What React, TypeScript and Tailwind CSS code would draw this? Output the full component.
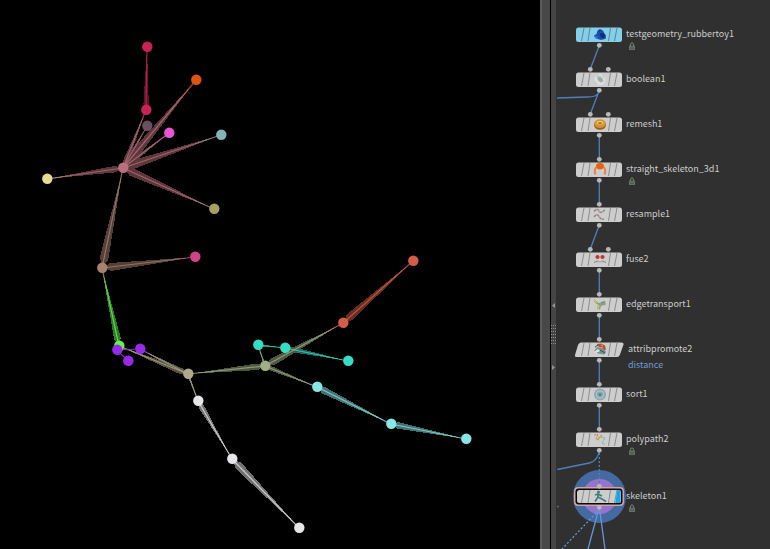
type Joint = { x: number; y: number; color: string };

const joints: Record<string, Joint> = {
  crown: { x: 147, y: 47, color: "#c92356" },
  brow: { x: 146, y: 110, color: "#c92356" },
  ear: { x: 196, y: 80, color: "#e0530f" },
  eye: { x: 147, y: 126, color: "#6a5062" },
  nose: { x: 169, y: 133, color: "#e854d4" },
  cheek: { x: 221, y: 135, color: "#82b5b5" },
  jaw: { x: 214, y: 209, color: "#a5a163" },
  horn: { x: 47, y: 179, color: "#e5dc92" },
  head: { x: 123, y: 168, color: "#b9707a" },
  neck: { x: 102, y: 268, color: "#a88370" },
  throat: { x: 195, y: 257, color: "#d04388" },
  chest: { x: 119, y: 346, color: "#62f54e" },
  pelvis: { x: 188, y: 374, color: "#b0a98a" },
  hand: { x: 128, y: 361, color: "#982bea" },
  wrist: { x: 117, y: 350, color: "#982bea" },
  elbow: { x: 140, y: 349, color: "#982bea" },
  spine: { x: 265, y: 366, color: "#9eb083" },
  finA: { x: 258, y: 345, color: "#37dcc5" },
  finB: { x: 285, y: 348, color: "#37dcc5" },
  finC: { x: 348, y: 361, color: "#37dcc5" },
  wingA: { x: 343, y: 323, color: "#d35d47" },
  wingB: { x: 413, y: 261, color: "#d35d47" },
  tailA: { x: 317, y: 387, color: "#88e7e5" },
  tailB: { x: 391, y: 424, color: "#88e7e5" },
  tailC: { x: 466, y: 439, color: "#88e7e5" },
  legA: { x: 198, y: 401, color: "#e6e6e8" },
  legB: { x: 232, y: 459, color: "#e6e6e8" },
  legC: { x: 299, y: 528, color: "#e6e6e8" },
};

// parent, child, body colour
const bones: [string, string, string][] = [
  ["head", "brow", "#5b363b"],
  ["head", "eye", "#5b363b"],
  ["head", "ear", "#5b363b"],
  ["head", "nose", "#5b363b"],
  ["head", "cheek", "#5b363b"],
  ["head", "jaw", "#5b363b"],
  ["head", "horn", "#5b363b"],
  ["brow", "crown", "#65112b"],
  ["neck", "head", "#534037"],
  ["neck", "throat", "#534037"],
  ["chest", "neck", "#2f7a25"],
  ["pelvis", "chest", "#565243"],
  ["pelvis", "elbow", "#565243"],
  ["pelvis", "legA", "#565243"],
  ["wrist", "elbow", "#4b1574"],
  ["wrist", "hand", "#4b1574"],
  ["spine", "pelvis", "#4d5640"],
  ["spine", "finA", "#4d5640"],
  ["finA", "finB", "#1a6c61"],
  ["finB", "finC", "#1a6c61"],
  ["spine", "wingA", "#4d5640"],
  ["wingA", "wingB", "#672d23"],
  ["spine", "tailA", "#4d5640"],
  ["tailA", "tailB", "#437170"],
  ["tailB", "tailC", "#437170"],
  ["legA", "legB", "#717172"],
  ["legB", "legC", "#717172"],
];

function bonePoints(a: Joint, b: Joint) {
  const dx = b.x - a.x;
  const dy = b.y - a.y;
  const at = (t: number, w: number) =>
    `${a.x + dx * t - dy * w},${a.y + dy * t + dx * w}`;
  return [
    at(0.04, 0.012),
    at(0.09, 0.042),
    at(0.16, 0.04),
    at(0.9, 0.004),
    at(0.9, -0.004),
    at(0.16, -0.04),
    at(0.09, -0.042),
    at(0.04, -0.012),
  ].join(" ");
}

function Viewport() {
  return (
    <main className="min-w-0 flex-1 bg-black">
      <svg
        viewBox="0 0 540 549"
        preserveAspectRatio="xMinYMin meet"
        className="block h-full w-full"
        role="img"
        aria-label="Skeleton"
      >
        <defs>
          {bones.map(([from, to]) => (
            <linearGradient
              key={from + to}
              id={`${from}-${to}`}
              gradientUnits="userSpaceOnUse"
              x1={joints[from].x}
              y1={joints[from].y}
              x2={joints[to].x}
              y2={joints[to].y}
            >
              <stop offset="0" stopColor={joints[from].color} />
              <stop offset="0.7" stopColor={joints[from].color} />
              <stop offset="1" stopColor={joints[to].color} />
            </linearGradient>
          ))}
        </defs>
        <g shapeRendering="crispEdges">
          {bones.map(([from, to, color]) => (
            <polygon
              key={from + to}
              points={bonePoints(joints[from], joints[to])}
              fill={color}
            />
          ))}
        </g>
        {bones.map(([from, to]) => (
          <line
            key={from + to}
            x1={joints[from].x}
            y1={joints[from].y}
            x2={joints[to].x}
            y2={joints[to].y}
            stroke={`url(#${from}-${to})`}
            strokeWidth="1.2"
            opacity="0.78"
          />
        ))}
        {Object.entries(joints).map(([name, j]) => (
          <circle key={name} cx={j.x + 0.3} cy={j.y - 0.2} r="5.2" fill={j.color} />
        ))}
      </svg>
    </main>
  );
}

function Splitter() {
  return (
    <div className="flex shrink-0">
      <div className="w-[2px] bg-[#5c5c5c]" />
      <div className="w-2 bg-[#484848]" />
      <div className="w-px bg-black" />
      <div className="flex w-[5px] flex-col items-center bg-[#454545] pt-[302px]">
        <svg width="5" height="68" viewBox="0 0 5 68" aria-hidden="true">
          <path d="M4 1v5L1 3.500zM1 63v5l3-2.500z" fill="#929292" />
          {[0, 1, 2, 3, 4, 5, 6].map((i) => (
            <path
              key={i}
              d={`M0 ${23.5 + i * 3}h5`}
              stroke="#8b8b8b"
              strokeDasharray="1 1"
            />
          ))}
        </svg>
      </div>
    </div>
  );
}

function Glyph({ kind }: { kind: string }) {
  switch (kind) {
    case "toy":
      return (
        <>
          <path d="M18 8.500l2.500-1.500 1-3.500 2.500-1.500 3 1.500 1.500 3 1.500 2-1 3.500-4 1-5-1.500z" fill="#1c50ae" />
          <path d="M24 6l4 .5 1.500 2.500-2 2.500-3-1.500z" fill="#0b2f83" />
          <path d="M18 8.500l3.500 1 1 2.500-3.500-1z" fill="#2f74d2" />
          <path d="M22 4l2-1.500 1 1.500-2 2z" fill="#174297" />
          <path d="M28 11l2-1.500v2.500z" fill="#665344" />
        </>
      );
    case "boolean":
      return (
        <>
          <circle cx="24" cy="7.500" r="5.500" fill="#dcdede" />
          <path d="M20 3l5 1 3 5-3 2-3-2z" fill="#bfc4c5" />
          <path d="M22 5l4 1 1 3-2 1-3-2z" fill="#a0a6a8" />
          <path d="M18 9l3 3M27 3l1 3" stroke="#b6cbb9" fill="none" />
        </>
      );
    case "remesh":
      return (
        <>
          <ellipse cx="24" cy="8" rx="6" ry="4.800" fill="#946021" />
          <ellipse cx="24" cy="6.600" rx="5.800" ry="4.400" fill="#d6932d" />
          <ellipse cx="24" cy="5.800" rx="3.500" ry="2" fill="#f0c368" />
          <ellipse cx="24" cy="6.200" rx="2" ry="1" fill="#a96f24" />
        </>
      );
    case "straight":
      return (
        <>
          <path
            d="M22 4q-5 3-2.500 8.500M26 4q5 3 2.500 8.500"
            stroke="#e9803b"
            strokeWidth="2"
            fill="none"
          />
          <path d="M20 4q0-3 4-3t4 3q-1 3.500-4 3.500t-4-3.500" fill="#e8610b" />
        </>
      );
    case "resample":
      return (
        <path
          d="M18 4.500q3-4 5-.5t6-1.500M18 10q3-4 5-.5t5 2.500"
          stroke="#9a8580"
          strokeWidth="1.500"
          strokeDasharray="3 .5"
          fill="none"
        />
      );
    case "fuse":
      return (
        <>
          <path d="M18 10.500l3-1.500 2 1M25 10l2-1 3 1.500" stroke="#7d827d" fill="none" />
          <path d="M19 5h10M22 9.500h4" stroke="#d9988d" />
          <circle cx="21.500" cy="5" r="2" fill="#bd3a2d" />
          <circle cx="26.500" cy="5" r="2" fill="#bd3a2d" />
        </>
      );
    case "edge":
      return (
        <>
          <path d="M18 2l4.500 4 6.500-1.500 1 3-5 1.500-1 3.500-3-.5 1-4-4-3.500z" fill="#8c9f7e" />
          <path d="M18 3l3 2.500M23 8l-1 4" stroke="#d3c25c" strokeWidth="1.400" />
          <path d="M25 5.500l4-1" stroke="#6e867d" />
        </>
      );
    case "attrib":
      return (
        <>
          <path d="M18 9l3-4 7 1 2 4-2 2.500-6-1z" fill="#78938c" />
          <path d="M21 2l4-.5 4 2 1 4-2 .5-1-2.500-5-1z" fill="#c3482d" />
          <path d="M18 10l4-3 2 2-4 2z" fill="#e4e4df" />
          <path d="M24 8l5 3M19 5l3-2" stroke="#394c4b" />
          <path d="M25 3l2 1" stroke="#dfb35d" />
        </>
      );
    case "sort":
      return (
        <>
          <circle cx="24" cy="7.500" r="6" fill="#8ba8ae" />
          <circle cx="24" cy="7.500" r="3.800" fill="none" stroke="#b3cbd0" />
          <circle cx="24" cy="7.500" r="1.500" fill="#61818b" />
        </>
      );
    case "polypath":
      return (
        <>
          <path d="M18 3l4-.5-2 4.500 3 1" stroke="#d07c6a" fill="none" strokeDasharray="2 .5" />
          <path d="M25 5l4 1-3 5 3 1.500" stroke="#75b0b4" fill="none" strokeDasharray="2 .5" />
          <path d="M22 7l4-4" stroke="#cba343" strokeWidth="1.500" />
        </>
      );
    default:
      return (
        <>
          <circle cx="22.500" cy="3" r="1.500" fill="#437f80" />
          <path
            d="M22 4v4l4 2 4 2.500M22 8l-3 4.500M19 6l3-1 4 2"
            stroke="#437f80"
            strokeWidth="1.700"
            strokeLinejoin="round"
            fill="none"
          />
        </>
      );
  }
}

type GraphNode = {
  name: string;
  kind: string;
  y: number;
  twoInputs?: boolean;
  source?: boolean;
  locked?: boolean;
  note?: string;
};

const nodes: GraphNode[] = [
  { name: "testgeometry_rubbertoy1", kind: "toy", y: 27, source: true, locked: true },
  { name: "boolean1", kind: "boolean", y: 72, twoInputs: true },
  { name: "remesh1", kind: "remesh", y: 117, twoInputs: true },
  { name: "straight_skeleton_3d1", kind: "straight", y: 162, locked: true },
  { name: "resample1", kind: "resample", y: 207 },
  { name: "fuse2", kind: "fuse", y: 252, twoInputs: true },
  { name: "edgetransport1", kind: "edge", y: 297 },
  { name: "attribpromote2", kind: "attrib", y: 342, note: "distance" },
  { name: "sort1", kind: "sort", y: 387 },
  { name: "polypath2", kind: "polypath", y: 432, locked: true },
  { name: "skeleton1", kind: "skeleton", y: 489, locked: true },
];

function NodeBody({ kind }: { kind: string }) {
  const selected = kind === "skeleton";
  return (
    <svg width="50" height="20" viewBox="-2 -2 50 20" aria-hidden="true">
      {selected && (
        <rect x="-2" y="-2" width="50" height="19" rx="4" fill="#d7a29e" />
      )}
      {selected && (
        <rect x="-.5" y="-.5" width="47" height="16" rx="3" fill="#080808" />
      )}
      {kind === "attrib" ? (
        <path
          d="M5 .5h40q3 0 2.500 2L44 12.500q-1 2.500-3 2.500H1q-2.500 0-2-2L2 3q1-2.500 3-2.500z"
          fill="#cdcdcd"
        />
      ) : (
        <rect
          x={selected ? 1 : 0}
          y={selected ? 1 : 0.5}
          width={selected ? 44 : 46}
          height={selected ? 13 : 14.5}
          rx="2.500"
          fill={kind === "toy" ? "#85cfe9" : "#cdcdcd"}
        />
      )}
      {selected && <path d="M41 1h3.500v13H39.500z" fill="#03aef4" />}
      <path
        d="M8 1L5.500 14M14 1l-2 13M34.500 1L32.500 14M41 1l-2.500 13"
        stroke={kind === "toy" ? "#5a8797" : "#8c8c8c"}
        strokeWidth="1"
      />
      <Glyph kind={kind} />
    </svg>
  );
}

function Lock() {
  return (
    <svg width="6" height="8" viewBox="0 0 6 8" aria-hidden="true">
      <path d="M1.500 4V2.500a1.500 1.500 0 013 0V4" stroke="#7c877c" fill="none" />
      <rect y="3.500" width="6" height="4.500" fill="#667066" />
      <path d="M1 5h4M1 6.500h4" stroke="#4c554d" strokeWidth=".7" />
    </svg>
  );
}

function Wires() {
  return (
    <svg
      className="absolute left-0 top-0 h-[549px] w-[214px]"
      viewBox="556 0 214 549"
      fill="none"
      stroke="#507fbb"
      strokeWidth="1.300"
      aria-hidden="true"
    >
      <circle cx="599.500" cy="496.500" r="26.500" fill="#456aa2" stroke="none" />
      <circle cx="599.500" cy="496.500" r="17.500" fill="#9575cb" stroke="none" />
      <path d="M599.300 45.500L590.300 69" />
      <path d="M599.300 90.500L590.300 114M557 98l30-1c7 0 10-1 12-5" />
      <path d="M599.300 135v24M599.300 180v24M599.300 225L590.300 249" />
      <path d="M599.300 270v24M599.300 315v24M599.300 360v24M599.300 405v24" />
      <path d="M599.300 450c-1 9-6 12-10 13l-32 6.500" />
      <path d="M599.300 453v33" strokeDasharray="2 2" />
      <path d="M599.300 507L588 549M599.300 507L605 549" stroke="#649ad6" />
      <path d="M596 513L562 549" stroke="#649ad6" strokeDasharray="2 2" />
      <path d="M557 506.500h2" stroke="#666" />
    </svg>
  );
}

function Ports() {
  return (
    <svg
      className="absolute left-0 top-0 h-[549px] w-[214px]"
      viewBox="556 0 214 549"
      fill="#b8b8b8"
      aria-hidden="true"
    >
      {nodes.map((n) => (
        <g key={n.name}>
          <circle cx="599.300" cy={n.y + 18.3} r="2.400" />
          {n.twoInputs && <circle cx="590.300" cy={n.y - 2.7} r="2.400" />}
          {n.twoInputs && <circle cx="608.300" cy={n.y - 2.7} r="2.400" />}
          {!n.twoInputs && !n.source && (
            <circle cx="599.300" cy={n.y - 2.7} r="2.400" />
          )}
        </g>
      ))}
    </svg>
  );
}

function NetworkEditor() {
  return (
    <aside className="relative w-[214px] shrink-0 overflow-hidden bg-[#303030] font-['Noto_Sans_CJK_SC','Noto_Sans',sans-serif] text-[9px] leading-4 text-[#cccccc]">
      <Wires />
      {nodes.map((n) => (
        <div
          key={n.name}
          className="absolute left-[18px] flex items-start gap-[2px]"
          style={{ top: n.y - 2 }}
        >
          <NodeBody kind={n.kind} />
          <div className={n.note ? "pl-[2px] pt-px" : "pt-px"}>
            <p className="whitespace-nowrap">{n.name}</p>
            {n.locked && (
              <div className="pl-[3px]">
                <Lock />
              </div>
            )}
            {n.note && <p className="text-[#6f9bd0]">{n.note}</p>}
          </div>
        </div>
      ))}
      <Ports />
    </aside>
  );
}

export default function App() {
  return (
    <div className="flex h-screen overflow-hidden bg-black">
      <Viewport />
      <Splitter />
      <NetworkEditor />
    </div>
  );
}
